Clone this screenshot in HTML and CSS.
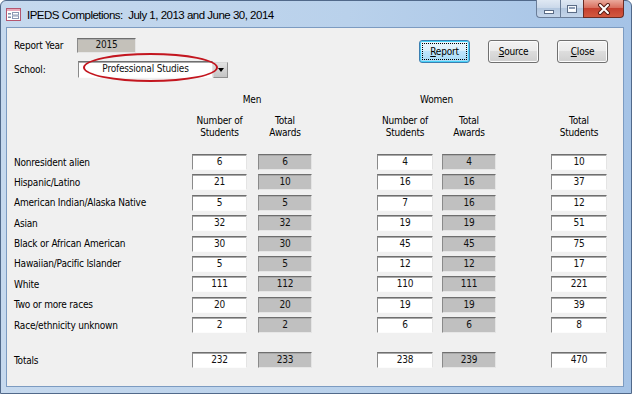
FILE: index.html
```html
<!DOCTYPE html>
<html>

<head>
    <title>IPEDS Completions</title>
    <meta charset="utf-8">
    <link rel="stylesheet" href="styles.css">
</head>

<body>
    <div class='window'>
        <div class='titlebar'>
            <svg class='app-icon' width='15' height='13' viewBox='0 0 15 13'>
                <rect x='0.5' y='0.5' width='14' height='12' fill='#fff' stroke='#b4566f' />
                <rect x='1' y='1' width='13' height='2' fill='#e8a9ba' />
                <rect x='2' y='5' width='3' height='1.5' fill='#7d8ca8' />
                <rect x='2' y='8.5' width='3' height='1.5' fill='#7d8ca8' />
                <rect x='6.5' y='4.5' width='6' height='2.5' fill='none' stroke='#8a98b2' />
                <rect x='6.5' y='8' width='6' height='2.5' fill='none' stroke='#8a98b2' />
            </svg>
            <span class='title'>IPEDS Completions:&nbsp; July 1, 2013 and June 30, 2014</span>
            <div class='caption-buttons'>
                <span class='cb cb-min'><i></i></span>
                <span class='cb cb-max'><i></i></span>
                <span class='cb cb-close'>
                    <svg width='14' height='12' viewBox='0 0 14 12'>
                        <path d='M3 2 L11 10 M11 2 L3 10' stroke='#5a1e16' stroke-width='4' stroke-linecap='round' />
                        <path d='M3 2 L11 10 M11 2 L3 10' stroke='#fff' stroke-width='2' stroke-linecap='round' />
                    </svg>
                </span>
            </div>
        </div>

        <div class='form'>
            <div class='form-top'>
                <div class='params'>
                    <div class='param-row'>
                        <label>Report Year</label>
                        <div class='field locked year'>2015</div>
                    </div>
                    <div class='param-row school-row'>
                        <label>School:</label>
                        <div class='combo'>
                            <div class='field combo-value'>Professional Studies</div>
                            <div class='combo-arrow'></div>
                            <span class='highlight'></span>
                        </div>
                    </div>
                </div>
                <div class='actions'>
                    <button class='btn btn-focus'><u>R</u>eport</button>
                    <button class='btn'><u>S</u>ource</button>
                    <button class='btn'><u>C</u>lose</button>
                </div>
            </div>

            <div class='cols group-heads'>
                <div class='men'>Men</div>
                <div class='women'>Women</div>
            </div>

            <div class='cols col-heads'>
                <div class='c-mn'>Number of<br>Students</div>
                <div class='c-mt'>Total<br>Awards</div>
                <div class='c-wn'>Number of<br>Students</div>
                <div class='c-wt'>Total<br>Awards</div>
                <div class='c-ts'>Total<br>Students</div>
            </div>

            <div class='cols data'>
                <div class='row-label'>Nonresident alien</div>
                <div class='field c-mn'>6</div>
                <div class='field locked c-mt'>6</div>
                <div class='field c-wn'>4</div>
                <div class='field locked c-wt'>4</div>
                <div class='field c-ts'>10</div>

                <div class='row-label'>Hispanic/Latino</div>
                <div class='field c-mn'>21</div>
                <div class='field locked c-mt'>10</div>
                <div class='field c-wn'>16</div>
                <div class='field locked c-wt'>16</div>
                <div class='field c-ts'>37</div>

                <div class='row-label'>American Indian/Alaska Native</div>
                <div class='field c-mn'>5</div>
                <div class='field locked c-mt'>5</div>
                <div class='field c-wn'>7</div>
                <div class='field locked c-wt'>16</div>
                <div class='field c-ts'>12</div>

                <div class='row-label'>Asian</div>
                <div class='field c-mn'>32</div>
                <div class='field locked c-mt'>32</div>
                <div class='field c-wn'>19</div>
                <div class='field locked c-wt'>19</div>
                <div class='field c-ts'>51</div>

                <div class='row-label'>Black or African American</div>
                <div class='field c-mn'>30</div>
                <div class='field locked c-mt'>30</div>
                <div class='field c-wn'>45</div>
                <div class='field locked c-wt'>45</div>
                <div class='field c-ts'>75</div>

                <div class='row-label'>Hawaiian/Pacific Islander</div>
                <div class='field c-mn'>5</div>
                <div class='field locked c-mt'>5</div>
                <div class='field c-wn'>12</div>
                <div class='field locked c-wt'>12</div>
                <div class='field c-ts'>17</div>

                <div class='row-label'>White</div>
                <div class='field c-mn'>111</div>
                <div class='field locked c-mt'>112</div>
                <div class='field c-wn'>110</div>
                <div class='field locked c-wt'>111</div>
                <div class='field c-ts'>221</div>

                <div class='row-label'>Two or more races</div>
                <div class='field c-mn'>20</div>
                <div class='field locked c-mt'>20</div>
                <div class='field c-wn'>19</div>
                <div class='field locked c-wt'>19</div>
                <div class='field c-ts'>39</div>

                <div class='row-label'>Race/ethnicity unknown</div>
                <div class='field c-mn'>2</div>
                <div class='field locked c-mt'>2</div>
                <div class='field c-wn'>6</div>
                <div class='field locked c-wt'>6</div>
                <div class='field c-ts'>8</div>
            </div>

            <div class='cols data totals'>
                <div class='row-label'>Totals</div>
                <div class='field c-mn'>232</div>
                <div class='field locked c-mt'>233</div>
                <div class='field c-wn'>238</div>
                <div class='field locked c-wt'>239</div>
                <div class='field c-ts'>470</div>
            </div>
        </div>
    </div>
</body>

</html>
```

FILE: styles.css
```css
* {
    box-sizing: border-box;
}

body {
    margin: 0;
    background: #fff;
}

.window {
    width: 632px;
    height: 394px;
    display: flex;
    flex-direction: column;
    padding: 0 7px 6px 5px;
    border: 1px solid #51698a;
    border-radius: 6px 6px 0 0;
    background: linear-gradient(to right, #c6d9ee 0%, #b9d1eb 55%, #a5c3e6 100%);
    font-family: "DejaVu Sans Condensed", "DejaVu Sans", sans-serif;
    font-stretch: semi-condensed;
    font-size: 10px;
    letter-spacing: -0.2px;
    color: #000;
}

/* title bar */

.titlebar {
    height: 26px;
    display: flex;
    align-items: center;
}

.app-icon {
    margin: 1px 6px 0 0;
    flex: none;
}

.title {
    font-family: "Liberation Sans", Arial, sans-serif;
    font-stretch: normal;
    font-size: 11.5px;
    letter-spacing: -0.5px;
    color: #000;
    margin-top: 1px;
}

.caption-buttons {
    margin-left: auto;
    align-self: flex-start;
    margin-top: -1px;
    display: flex;
    height: 18px;
}

.cb {
    display: flex;
    align-items: center;
    justify-content: center;
    height: 18px;
    border: 1px solid #6a7d98;
    border-top: none;
    background: linear-gradient(#dfe8f3 0%, #cbd9ea 45%, #b3c7df 50%, #c4d5ea 100%);
}

.cb-min {
    width: 24px;
    border-right: none;
    border-radius: 0 0 0 4px;
}

.cb-max {
    width: 23px;
    border-right: none;
}

.cb-close {
    width: 41px;
    border-color: #6b2c24;
    border-radius: 0 0 4px 0;
    background: linear-gradient(#eaa99c 0%, #d9705f 45%, #c5402f 50%, #d2593f 100%);
}

.cb-min i {
    display: block;
    width: 10px;
    height: 4px;
    margin-top: 6px;
    background: #fff;
    border: 1px solid #5b6c86;
}

.cb-max i {
    display: block;
    width: 10px;
    height: 8px;
    background: #fff;
    border: 1px solid #5b6c86;
    box-shadow: inset 0 0 0 1px #f4f8fc, inset 0 2px 0 1px #8c9cb4;
}

/* form body */

.form {
    flex: 1;
    background: #f0f0f0;
    border: 1px solid #7c9bc1;
    padding: 10px 15px 0 7px;
}

.form-top {
    display: flex;
    justify-content: space-between;
    height: 40px;
}

.params {
    display: flex;
    flex-direction: column;
    gap: 8px;
}

.param-row {
    display: flex;
    align-items: center;
    height: 15px;
}

.param-row label {
    width: 63px;
}

.school-row {
    height: 17px;
}

.field {
    height: 16px;
    line-height: 13px;
    text-align: center;
    background: #fff;
    color: #111;
    border-top: 1px solid #6f6f6f;
    border-left: 1px solid #8a8a8a;
    border-right: 1px solid #e4e4e4;
    border-bottom: 1px solid #fcfcfc;
    box-shadow: inset 0 1px 0 #a9a9a9;
}

.field.locked {
    background: #c0c0c0;
    border-bottom-color: #e6e6e6;
}

.field.year {
    width: 59px;
    height: 15px;
    line-height: 12px;
    background: #c4c1ba;
}

.combo {
    position: relative;
    display: flex;
    margin-left: 1px;
    height: 17px;
}

.combo-value {
    width: 135px;
    height: 17px;
    line-height: 14px;
}

.combo-arrow {
    width: 15px;
    height: 16px;
    margin-top: 1px;
    display: flex;
    align-items: center;
    justify-content: center;
    border: 1px solid #8f8f8f;
    border-top-color: #d8d8d8;
    border-left-color: #d8d8d8;
    background: linear-gradient(#e2e2e2, #c4c4c4);
}

.combo-arrow::before {
    content: '';
    border-top: 4px solid #000;
    border-left: 3px solid transparent;
    border-right: 3px solid transparent;
}

.highlight {
    position: absolute;
    left: 5px;
    top: -8px;
    width: 135px;
    height: 29px;
    border: 2px solid #c3161f;
    border-radius: 50%;
    pointer-events: none;
}

.actions {
    display: flex;
    gap: 18px;
    margin-top: 2px;
}

.btn {
    width: 51px;
    height: 23px;
    padding: 0;
    font: inherit;
    font-stretch: semi-condensed;
    letter-spacing: -0.2px;
    color: #000;
    border: 1px solid #707070;
    border-radius: 3px;
    background: linear-gradient(#f2f2f2 0%, #ebebeb 45%, #dddddd 50%, #cfcfcf 100%);
    box-shadow: inset 0 0 0 1px #fcfcfc;
}

.btn-focus {
    border-color: #3c7fb1;
    background: linear-gradient(#eaf6fd 0%, #d9f0fc 45%, #bee6fd 50%, #a7d9f5 100%);
    box-shadow: inset 0 0 0 1px #48d2f8;
    outline: 1px dotted #000;
    outline-offset: -4px;
}

/* grid */

.cols {
    display: grid;
    grid-template-columns: 178px 55px 11px 54px 65px 56px 9px 54px 55px 56px;
}

.c-mn {
    grid-column: 2;
}

.c-mt {
    grid-column: 4;
}

.c-wn {
    grid-column: 6;
}

.c-wt {
    grid-column: 8;
}

.c-ts {
    grid-column: 10;
}

.group-heads {
    margin-top: 15px;
    line-height: 14px;
    text-align: center;
}

.men {
    grid-column: 2 / 5;
}

.women {
    grid-column: 6 / 9;
}

.col-heads {
    margin-top: 8px;
    line-height: 12px;
    text-align: center;
}

.data {
    margin-top: 15px;
    grid-auto-rows: 16px;
    row-gap: 4.375px;
    align-items: center;
}

.row-label {
    grid-column: 1;
}

.totals {
    margin-top: 19px;
}
```
